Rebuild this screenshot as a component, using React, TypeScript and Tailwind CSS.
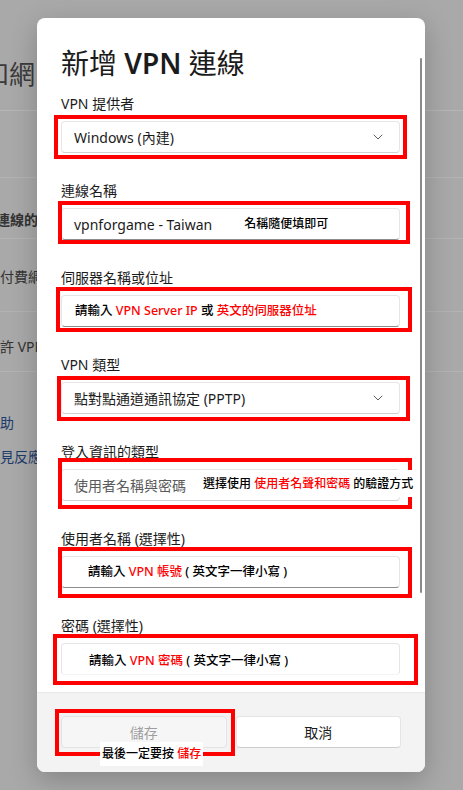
import type { ReactNode } from "react";

const FONT = "font-['Segoe_UI','Noto_Sans','Noto_Sans_CJK_TC',sans-serif]";

function Chevron() {
  return (
    <svg width="10" height="6" viewBox="0 0 10 6" className="ml-auto mr-1 shrink-0">
      <path d="M1 1l4 4 4-4" fill="none" stroke="#5d5d5d" strokeWidth="1" strokeLinecap="round" strokeLinejoin="round" />
    </svg>
  );
}

interface FieldProps {
  label:    ReactNode;
  box:      string;
  line:     string;
  children: ReactNode;
  first?:   boolean;
}

function Field({ label, box, line, children, first }: FieldProps) {
  return (
    <div className={first ? "mt-[11px]" : "mt-[28px]"}>
      <p className="h-5 text-[14px] leading-5 text-[#1b1b1b]">{label}</p>
      <div className="relative mt-[7px]">
        <div className={`relative flex h-8 items-center rounded-[4px] border border-[#e6e6e6] bg-white pl-3 pr-3 text-[14px] text-[#1b1b1b] ${line}`}>
          {children}
        </div>
        {/* red annotation frame */}
        <div className={`pointer-events-none absolute border-4 border-[#ff0000] ${box}`} />
      </div>
    </div>
  );
}

function Red({ children }: { children: ReactNode }) {
  return <span className="text-[#ff0000]">{children}</span>;
}

// settings page dimmed behind the dialog; only its left edge shows
function Background() {
  return (
    <div className="flex flex-col text-[#333]">
      <div className="h-[111px] border-b border-[#b6b6b6] pt-[57px]">
        <div className="w-[37px] overflow-hidden">
          <p className="-ml-[17px] whitespace-nowrap text-[26px] leading-[34px] text-[#3a3a3a]">和網</p>
        </div>
      </div>
      <div className="h-[67px] border-b border-[#b3b3b3]" />
      <div className="h-[61px] border-b border-[#b3b3b3] pt-[32px]">
        <div className="w-[37px] overflow-hidden">
          <p className="-ml-[4px] whitespace-nowrap text-[14px] font-semibold leading-5">連線的</p>
        </div>
      </div>
      <div className="h-[73px] border-b border-[#b3b3b3] pt-[28px]">
        <div className="w-[37px] overflow-hidden">
          <p className="whitespace-nowrap text-[14px] leading-5">付費網</p>
        </div>
      </div>
      <div className="h-[60px] border-b border-[#b3b3b3] pt-[25px]">
        <div className="w-[37px] overflow-hidden">
          <p className="whitespace-nowrap text-[14px] leading-5">許 VPN</p>
        </div>
      </div>
      <div className="w-[37px] overflow-hidden pt-[41px] text-[14px] leading-5 text-[#1d3c6b]">
        <p className="whitespace-nowrap">助</p>
        <p className="mt-[14px] whitespace-nowrap">見反應</p>
      </div>
    </div>
  );
}

export default function App() {
  return (
    <div className={`relative h-[790px] w-[463px] overflow-hidden bg-[#a9a9a9] ${FONT}`}>
      <Background />

      {/* dialog */}
      <div className="absolute left-[37px] top-[18px] flex h-[754px] w-[388px] flex-col overflow-hidden rounded-[8px] bg-white shadow-[0_8px_28px_rgba(0,0,0,0.22)]">
        <div className="relative h-[674px] shrink-0 overflow-hidden pl-6 pr-[25px] pt-[25px]">
          <h1 className="text-[28px] leading-10 text-[#1b1b1b]">
            新增 <span className="font-semibold">VPN</span> 連線
          </h1>

          <Field first line="border-b-[#d0d0d0]" label="VPN 提供者" box="-left-[7px] -right-[7px] -top-[6px] -bottom-[6px]">
            <span>Windows (內建)</span>
            <Chevron />
          </Field>

          <Field line="border-b-[#8d8d8d]" label="連線名稱" box="-left-[3px] -right-[10px] -top-[7px] -bottom-[4px]">
            <span className="whitespace-nowrap">vpnforgame - Taiwan</span>
            <span className="ml-8 whitespace-nowrap text-[12px] font-medium text-black">名稱隨便填即可</span>
          </Field>

          <Field line="border-b-[#8d8d8d]" label="伺服器名稱或位址" box="-left-[5px] -right-[12px] -top-[8px] -bottom-[5px]">
            <span className="whitespace-nowrap pl-px text-[12.5px] font-medium text-black">
              請輸入 <Red>VPN Server IP</Red> 或 <Red>英文的伺服器位址</Red>
            </span>
          </Field>

          <Field line="border-b-[#d0d0d0]" label="VPN 類型" box="-left-[4px] -right-[10px] -top-[6px] -bottom-[7px]">
            <span className="whitespace-nowrap">點對點通道通訊協定 (PPTP)</span>
            <Chevron />
          </Field>

          <Field line="border-b-[#d0d0d0]" label="登入資訊的類型" box="-left-[3px] -right-[12px] -top-[11px] -bottom-[8px]">
            <span className="whitespace-nowrap text-[#5a5a5a]">使用者名稱與密碼</span>
            <span className="absolute left-[138px] top-0 bottom-[3px] z-10 flex items-center whitespace-nowrap bg-white px-[3px] text-[12px] font-medium text-black">
              選擇使用&nbsp;<Red>使用者名聲和密碼</Red>&nbsp;的驗證方式
            </span>
          </Field>

          <Field line="border-b-[#8d8d8d]" label="使用者名稱 (選擇性)" box="-left-[3px] -right-[12px] -top-[9px] -bottom-[10px]">
            <span className="whitespace-nowrap pl-[14px] text-[12.5px] font-medium text-black">
              請輸入 <Red>VPN 帳號</Red> ( 英文字一律小寫 )
            </span>
          </Field>

          <Field line="border-b-[#f4f4f4]" label="密碼 (選擇性)" box="-left-[8px] -right-[18px] -top-[9px] -bottom-[10px]">
            <span className="whitespace-nowrap pl-[15px] pt-1 text-[12.5px] font-medium text-black">
              請輸入 <Red>VPN 密碼</Red> ( 英文字一律小寫 )
            </span>
          </Field>

          {/* scrollbar */}
          <div className="absolute right-[3px] top-[40px] h-[535px] w-[2px] rounded-full bg-[#8a8a8a]" />
        </div>

        <div className="grid h-20 grid-cols-2 items-start gap-[9px] border-t border-[#e8e8e8] bg-[#f3f3f3] px-6 pt-[23px]">
          <div className="relative h-8">
            <button className="flex h-8 w-full items-center justify-center rounded-[4px] border border-[#e3e3e3] bg-[#f6f6f6] text-[14px] text-[#9e9e9e]">
              儲存
            </button>
            <div className="pointer-events-none absolute -left-[6px] -right-[8px] -top-[7px] -bottom-[8px] border-4 border-[#ff0000]" />
            <div className="absolute left-[39px] top-[26px] z-10 flex h-6 items-center whitespace-nowrap bg-white px-[2px] text-[12px] font-medium text-black">
              最後一定要按&nbsp;<Red>儲存</Red>
            </div>
          </div>
          <button className="flex h-8 w-full items-center justify-center rounded-[4px] border border-[#e5e5e5] border-b-[#cfcfcf] bg-white text-[14px] text-[#1b1b1b]">
            取消
          </button>
        </div>
      </div>
    </div>
  );
}
